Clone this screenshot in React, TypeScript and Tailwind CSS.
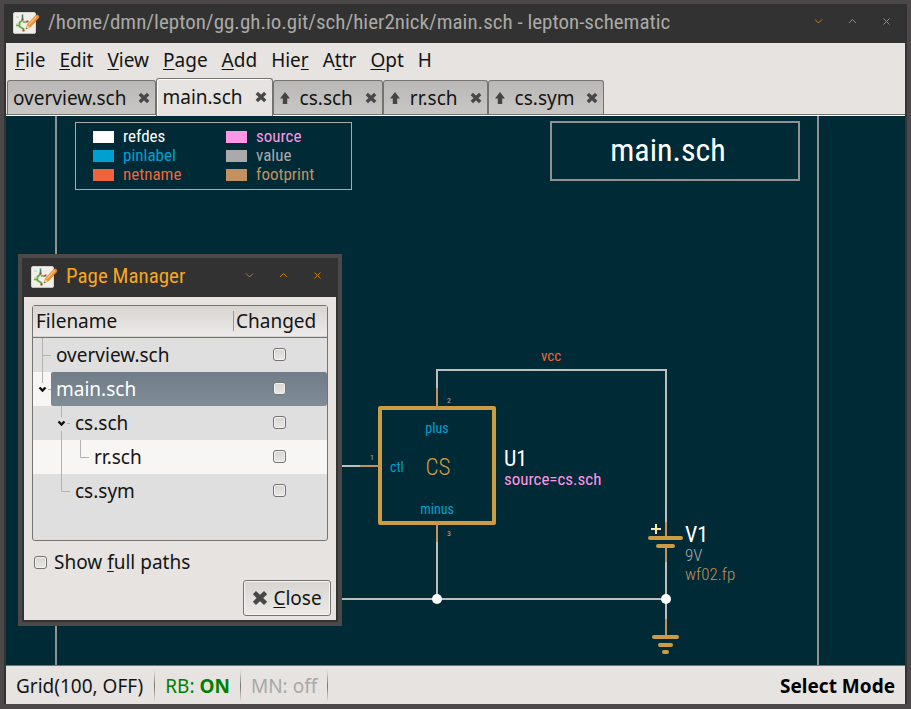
import React from 'react';

const UI_FONT = "font-['Noto_Sans','Open_Sans',sans-serif]";
const TITLE_FONT = "font-['Roboto_Condensed','Liberation_Sans_Narrow',Roboto,sans-serif]";

function AppIcon() {
  return (
    <svg width="27" height="23" viewBox="0 0 27 23" className="shrink-0" aria-hidden="true">
      <rect x="0.5" y="0.5" width="22" height="21" rx="1.5" fill="#f0efea" stroke="#d6d3ca" />
      <path d="M1 21.5h21" stroke="#d8bc86" />
      <path d="M3 5h3M3 12h2" stroke="#c4c4c0" />
      <path d="M9.5 2.5v6" stroke="#2c8c84" strokeWidth="1.6" />
      <path d="M9.5 8.5L6.5 10.5v4l4 2.5v2" stroke="#5cb040" strokeWidth="1.8" fill="none" />
      <path d="M3 13.5h3.5M10 10h4" stroke="#5cb040" strokeWidth="1.4" />
      <path d="M8.5 7.5h2M13.5 9.5h2M9.5 18.5h2" stroke="#c83c30" strokeWidth="1.8" />
      <path d="M13 17l1.4-4.6L23 3.2q1.4-.8 2.4.2t.4 2.4L17.4 15z" fill="#f0922e" stroke="#c8701c" strokeWidth="0.6" />
      <path d="M15.6 12.8l8-8.2" stroke="#ffbe6c" strokeWidth="1.4" />
      <path d="M13 17l1.2-3.8 2.6 2.4z" fill="#ead8b8" />
      <path d="M13 17l.5-1.6 1 1z" fill="#4a4038" />
    </svg>
  );
}

function CrossIcon({ size = 12 }: { size?: number }) {
  return (
    <svg width={size} height={size} viewBox="0 0 12 12" className="shrink-0" aria-hidden="true">
      <path d="M1.8 2l8.4 8M10.2 2l-8.4 8" stroke="#484848" strokeWidth="3.4" />
    </svg>
  );
}

function UpIcon() {
  return (
    <svg width="10" height="12" viewBox="0 0 10 12" className="shrink-0" aria-hidden="true">
      <path d="M5 0l5 6.5H7.2V12H2.8V6.5H0z" fill="#444444" />
    </svg>
  );
}

function WindowButtons({ first }: { first: string }) {
  const marks = [
    { name: 'Minimize', d: 'M1 2.5l3.5 3.5L8 2.5', color: first },
    { name: 'Maximize', d: 'M1 6l3.5-3.5L8 6', color: '#c5841c' },
    { name: 'Close window', d: 'M1.5 1.5l6 6M7.5 1.5l-6 6', color: '#c5841c' },
  ];
  return (
    <div className="mb-1 ml-auto flex gap-[25px]">
      {marks.map((m) => (
        <button key={m.name} type="button" aria-label={m.name} className="block">
          <svg width="9" height="9" viewBox="0 0 9 9" fill="none">
            <path d={m.d} stroke={m.color} />
          </svg>
        </button>
      ))}
    </div>
  );
}

const menus: [string, string, string][] = [
  ['', 'F', 'ile'],
  ['', 'E', 'dit'],
  ['', 'V', 'iew'],
  ['', 'P', 'age'],
  ['', 'A', 'dd'],
  ['Hie', 'r', ''],
  ['A', 't', 'tr'],
  ['', 'O', 'pt'],
  ['H', '', ''],
];

const tabs = [
  { name: 'overview.sch', up: false, active: false },
  { name: 'main.sch', up: false, active: true },
  { name: 'cs.sch', up: true, active: false },
  { name: 'rr.sch', up: true, active: false },
  { name: 'cs.sym', up: true, active: false },
];

const legend = [
  { x: 93, y: 131, color: '#ffffff', name: 'refdes' },
  { x: 93, y: 150, color: '#00a0d0', name: 'pinlabel' },
  { x: 93, y: 169, color: '#f0643c', name: 'netname' },
  { x: 226, y: 131, color: '#ff96e6', name: 'source' },
  { x: 226, y: 150, color: '#aaaaaa', name: 'value' },
  { x: 226, y: 169, color: '#c39060', name: 'footprint' },
];

function Schematic() {
  return (
    <svg
      className="absolute inset-0 h-full w-full font-['Roboto_Condensed','Liberation_Sans_Narrow',Roboto,sans-serif]"
      role="img"
      aria-label="Schematic main.sch"
    >
      <g transform="translate(-6 -116)" fill="none">
        <path d="M56 100V2000M818 100V2000" stroke="#919191" strokeWidth="2" />
        <rect x="75.5" y="122.5" width="276" height="67" stroke="#aaaaaa" />
        <rect x="551" y="122" width="248" height="58" stroke="#919191" strokeWidth="2" />
        {legend.map((l) => (
          <g key={l.name} fill={l.color}>
            <rect x={l.x} y={l.y} width="21" height="12" />
            <text x={l.x + 30} y={l.y + 11} fontSize="17">{l.name}</text>
          </g>
        ))}
        <text x="668" y="161" fontSize="32" textAnchor="middle" fill="#ffffff">main.sch</text>

        <path d="M437 388V370H666V522M437 542V599M340 466H360M340 599H666M666 562V620" stroke="#bebebe" strokeWidth="2" />
        <path d="M437 388V408M437 524V542M360 466H380M666 522V538M666 546V562M666 619V636" stroke="#c39060" strokeWidth="2" />
        <rect x="380" y="408" width="114" height="115" stroke="#cc9c44" strokeWidth="4" strokeLinejoin="round" />
        <path d="M437 406V410M437 521V525M378 466H381" stroke="#c39060" strokeWidth="2" />
        <path d="M650 538H681M658 546H673M654 637H677M660 645H671M664 652H667" stroke="#cc9c44" strokeWidth="4" strokeLinecap="round" />
        <path d="M651 529H661M656 524V534" stroke="#ffe6a8" strokeWidth="2" />
        <circle cx="437" cy="599" r="5" fill="#ffffff" />
        <circle cx="666" cy="599" r="5" fill="#ffffff" />

        <text x="541" y="361" fontSize="15" fill="#f0643c">vcc</text>
        <text x="447" y="403" fontSize="8" fill="#aaaaaa">2</text>
        <text x="370" y="460" fontSize="8" fill="#aaaaaa">1</text>
        <text x="447" y="536" fontSize="8" fill="#aaaaaa">3</text>
        <text x="437" y="433" fontSize="14" textAnchor="middle" fill="#00a0d0">plus</text>
        <text x="390" y="472" fontSize="14" fill="#00a0d0">ctl</text>
        <text x="437" y="514" fontSize="14" textAnchor="middle" fill="#00a0d0">minus</text>
        <text x="438" y="475" fontSize="23" textAnchor="middle" fill="#cc9c44" className="font-light">CS</text>
        <text x="504" y="466" fontSize="22" fill="#ffffff">U1</text>
        <text x="504" y="485" fontSize="17" fill="#ff96e6">source=cs.sch</text>
        <text x="685" y="542" fontSize="22" fill="#ffffff">V1</text>
        <text x="685" y="561" fontSize="17" fill="#aaaaaa" className="font-light">9V</text>
        <text x="685" y="580" fontSize="17" fill="#c39060" className="font-light">wf02.fp</text>
      </g>
    </svg>
  );
}

const checkboxStyle =
  'block h-[13px] w-[13px] appearance-none rounded-[3px] border border-[#757370] bg-linear-to-b from-[#d8d6d2] to-[#e9e7e4] shadow-[inset_0_0_0_1px_#f4f3f2]';

const rows = [
  { name: 'overview.sch', width: 18, lines: 'M9.5 0V34M9.5 17.5H18', arrow: '', tone: 'bg-[#dfdfdf]', selected: false },
  { name: 'main.sch', width: 18, lines: 'M9.5 0V11M15 17.5H18', arrow: 'M6.5 15.5l3 3l3-3', tone: 'bg-[#f7f6f5]', selected: true },
  { name: 'cs.sch', width: 37, lines: 'M28.5 0V11M28.5 25V34M34 17.5H37', arrow: 'M25.5 15.5l3 3l3-3', tone: 'bg-[#dfdfdf]', selected: false },
  { name: 'rr.sch', width: 56, lines: 'M28.5 0V34M47.5 0V17.5H56', arrow: '', tone: 'bg-[#f7f6f5]', selected: false },
  { name: 'cs.sym', width: 37, lines: 'M28.5 0V17.5H37', arrow: '', tone: 'bg-[#dfdfdf]', selected: false },
];

function PageManager() {
  return (
    <section
      aria-label="Page Manager"
      className="absolute left-3 top-[138px] w-[324px] border-4 border-[#4c4849] bg-[#323232] px-[2px] pb-[2px]"
    >
      <header className="flex h-[39px] items-center pr-3.5 pl-[7px]">
        <AppIcon />
        <h2 className={`${TITLE_FONT} mb-1 ml-2 text-[21px] leading-6 text-[#f5a623]`}>Page Manager</h2>
        <WindowButtons first="#a8854c" />
      </header>
      <div className="bg-[#e6e3e0] px-2 pt-2 pb-1">
        <div className="h-[236px] rounded-[3px] border border-[#757370] bg-[#dfdfdf]">
          <table className="w-full table-fixed border-collapse text-left">
            <thead>
              <tr className="h-[31px] border-b border-[#757370] bg-linear-to-b from-[#d8d5d1] to-[#eceae8]">
                <th className="w-[200px] p-0 pl-[3px] font-normal">Filename</th>
                <th className="p-0 font-normal">
                  <div className="flex items-center">
                    <span className="h-5 w-px bg-[#9a9895]" />
                    <span className="ml-0.5">Changed</span>
                  </div>
                </th>
              </tr>
            </thead>
            <tbody>
              {rows.map((r) => (
                <tr key={r.name} className={r.tone}>
                  <td className="p-0">
                    <div className="flex h-[34px]">
                      <svg width={r.width} height="34" className="shrink-0" fill="none" aria-hidden="true">
                        <path d={r.lines} stroke="#b4b2b0" />
                        <path d={r.arrow} stroke="#101010" strokeWidth="2.4" />
                      </svg>
                      <span
                        className={`flex flex-1 items-center pl-[5px] ${
                          r.selected ? 'rounded-l-[2px] bg-linear-to-b from-[#707d88] to-[#808d97] text-white' : ''
                        }`}
                      >
                        {r.name}
                      </span>
                    </div>
                  </td>
                  <td className="p-0">
                    <div
                      className={`flex h-[34px] items-center justify-center pr-px ${
                        r.selected ? 'rounded-r-[2px] bg-linear-to-b from-[#707d88] to-[#808d97]' : ''
                      }`}
                    >
                      <input type="checkbox" aria-label={`${r.name} changed`} className={checkboxStyle} />
                    </div>
                  </td>
                </tr>
              ))}
            </tbody>
          </table>
        </div>
        <label className="mt-1 flex h-[34px] items-center gap-[7px] pl-[2px]">
          <input type="checkbox" className={checkboxStyle} />
          <span>
            Show <u className="underline-offset-2">f</u>ull paths
          </span>
        </label>
        <div className="mt-px flex justify-end">
          <button
            type="button"
            className="-mr-[3px] flex h-9 w-[88px] items-center justify-center gap-[5px] rounded-[3px] border border-[#757370] bg-linear-to-b from-[#d8d5d1] to-[#eceae8] shadow-[inset_0_0_0_1px_#f6f5f4]"
          >
            <CrossIcon size={16} />
            <span>
              <u className="underline-offset-2">C</u>lose
            </span>
          </button>
        </div>
      </div>
    </section>
  );
}

export default function App() {
  return (
    <div className={`${UI_FONT} flex min-h-screen flex-col border-x-4 border-t-4 border-b-[5px] border-[#4c4849] bg-[#323232] px-[2px] text-[19px] leading-6 text-[#141414]`}>
      <header className="flex h-[39px] shrink-0 items-center pr-3.5 pl-[7px]">
        <AppIcon />
        <h1 className={`${TITLE_FONT} mb-1 ml-2 text-[21px] leading-6 text-[#aaa9a5]`}>
          /home/dmn/lepton/gg.gh.io.git/sch/hier2nick/main.sch - lepton-schematic
        </h1>
        <WindowButtons first="#c5841c" />
      </header>

      <nav className="flex h-[35px] shrink-0 items-center gap-3.5 bg-[#e6e3e0] pb-0.5 pl-[9px]">
        {menus.map(([pre, key, post]) => (
          <button key={pre + key + post} type="button">
            {pre}
            <u className="underline-offset-2">{key}</u>
            {post}
          </button>
        ))}
      </nav>

      <div role="tablist" className="flex h-[38px] shrink-0 items-end border-b border-white bg-[#e6e3e0] pl-px shadow-[inset_0_-1px_0_#757370]">
        {tabs.map((t) => (
          <div
            key={t.name}
            className={`flex items-center rounded-t-[3px] border border-b-0 border-[#757370] ${
              t.active
                ? '-mb-px h-[38px] bg-[#e6e3e0] px-[5px] pb-0.5 shadow-[inset_1px_1px_0_#fff]'
                : 'mb-px h-[34px] bg-linear-to-b from-[#bab8b6] to-[#c9c7c5] px-[5px]'
            }`}
          >
            {t.up && (
              <span className="mr-2.5 ml-px">
                <UpIcon />
              </span>
            )}
            <button type="button" role="tab" aria-selected={t.active}>
              {t.name}
            </button>
            <button type="button" aria-label={`Close ${t.name}`} className="ml-3">
              <CrossIcon />
            </button>
          </div>
        ))}
      </div>

      <main className="relative min-h-[520px] flex-1 overflow-hidden bg-[#002b36]">
        <Schematic />
        <PageManager />
      </main>

      <footer className="flex h-[39px] shrink-0 items-center border-t border-[#757370] bg-[#e6e3e0] px-2.5 pt-0.5 shadow-[0_-1px_0_#fff]">
        <span>Grid(100, OFF)</span>
        <span className="mr-2.5 ml-[11px] h-8 w-px bg-linear-to-b from-transparent via-[#757370] to-transparent" />
        <span className="text-[#008000]">
          RB: <b>ON</b>
        </span>
        <span className="mx-2.5 h-8 w-px bg-linear-to-b from-transparent via-[#757370] to-transparent" />
        <span className="text-[#a9a8a6]">MN: off</span>
        <span className="mx-2.5 h-8 w-px bg-linear-to-b from-transparent via-[#757370] to-transparent" />
        <b className="ml-auto text-black">Select Mode</b>
      </footer>
    </div>
  );
}
